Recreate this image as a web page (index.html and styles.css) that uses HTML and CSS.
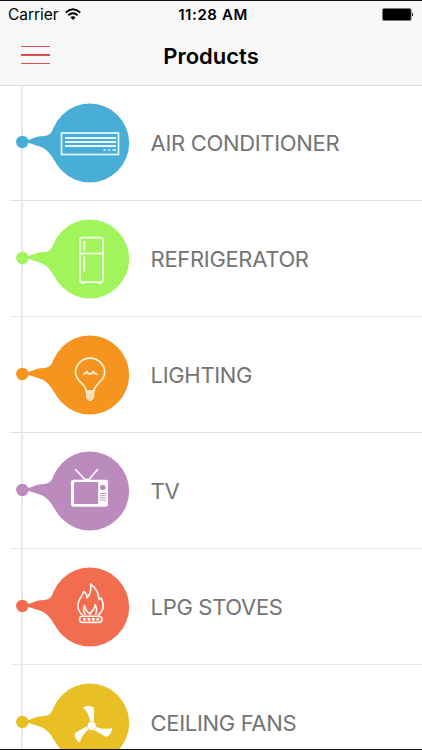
FILE: index.html
```html
<!DOCTYPE html>
<html lang="en">
<head>
<meta charset="utf-8">
<title>Products</title>
<link rel="stylesheet" href="styles.css">
</head>
<body>
<div class="screen">
<header class="header">
  <div class="status">
    <div class="carrier"><span>Carrier</span>
      <svg width="16" height="13" viewBox="0 0 16 13"><g fill="none" stroke="#000" stroke-width="2"><path d="M.8 4.6Q8-2 15.2 4.6"/><path d="M3.3 7.3Q8 3.1 12.7 7.3"/></g><path d="M5.4 9.3Q8 7.2 10.6 9.3L8 12Z"/></svg>
    </div>
    <div class="time">11:28 AM</div>
    <svg class="battery" width="32" height="13" viewBox="0 0 32 13"><rect x=".5" y=".5" width="28.6" height="12" rx="1.5" fill="#000" stroke="#777" stroke-width=".8"/><path d="M30 4.5Q32 6.5 30 8.5Z"/></svg>
  </div>
  <div class="nav">
    <div class="menu"><i></i><i></i><i></i></div>
    <h1>Products</h1>
  </div>
</header>
<svg class="defs" width="0" height="0"><defs>
  <g id="drop"><circle cx="22.3" cy="57" r="6.2"/><circle cx="89.8" cy="58" r="39.4"/><path d="M27 55.400C32 54 36 51.500 41 51.200C49 51 51.500 49 54 42L66 58L54.500 76C50 68 46 63.500 39 61.300C34 60 31 58.200 27 57.700Z"/></g>
</defs></svg>
<main class="list">
  <div class="row strong blue">
    <svg class="icon" viewBox="0 0 150 116"><use href="#drop"/><g fill="none" stroke="#eaf7fc"><rect x="61.500" y="48" width="57" height="21.500" stroke-width="1.700"/><path d="M65 53H116M65 57H116M65 61H116" stroke-width="1.800"/><path d="M103.500 65H105.500M108 65H110M112.500 65H116" stroke-width="1.700"/></g></svg>
    <span class="label">AIR CONDITIONER</span>
  </div>
  <div class="row green">
    <svg class="icon" viewBox="0 0 150 116"><use href="#drop"/><g fill="none" stroke="#f3ffe9" stroke-width="1.700"><rect x="79.900" y="36.700" width="23" height="44.400" rx="1.500"/><path d="M80 52.500H103"/><path d="M84.200 40V50M84.200 55.500V70.500" stroke-width="2"/><path d="M81.500 82.300H85M98 82.300H101.500" stroke-width="1.500"/></g></svg>
    <span class="label">REFRIGERATOR</span>
  </div>
  <div class="row strong orange">
    <svg class="icon" viewBox="0 0 150 116"><use href="#drop"/><g fill="none" stroke="#fff3df" stroke-width="1.600"><path d="M86.200 74C85.800 66.500 75.500 64.500 75.500 55.500A14.600 14.400 0 0 1 104.700 55.500C104.700 64.500 94.500 66.500 94 74Z"/><path d="M83 57.500Q86 57 86.800 54Q87.500 57 90 57Q92.500 57 93.300 54Q94 57 97.500 57.500"/><path d="M86.500 75H93.800V80L91.500 83.500H88.800L86.500 80Z" fill="#fbd29b" stroke-width="1"/><path d="M86 77H94M86.500 80H93.800" stroke-width=".8"/></g></svg>
    <span class="label">LIGHTING</span>
  </div>
  <div class="row purple">
    <svg class="icon" viewBox="0 0 150 116"><use href="#drop"/><path fill="#fff" fill-rule="evenodd" d="M73.500 46.800H105.500Q108 46.800 108 49V71Q108 73.800 105.500 73.800H73.500Q71 73.800 71 71V49Q71 46.800 73.500 46.800ZM75.500 49Q74 49 74 50.500V69.500Q74 71 75.500 71H98.200V49Z"/><circle cx="102.800" cy="54.500" r="2.800" fill="#bc8bbd"/><path d="M99.800 60.500H106M99.800 62.700H106M99.800 64.900H106M99.800 67.100H106" stroke="#bc8bbd" stroke-width=".9"/><path d="M75.500 36.500L85.500 47M97.500 36.500L88.500 47" stroke="#fff" stroke-width="1.600" stroke-linecap="round"/><path d="M83 47.500Q87 43.500 91 47.500Z" fill="#fff"/></svg>
    <span class="label">TV</span>
  </div>
  <div class="row red">
    <svg class="icon" viewBox="0 0 150 116"><use href="#drop"/><g fill="none" stroke="#fff4f0" stroke-width="1.600" stroke-linejoin="round"><path d="M83 66.500C77 62 77 55 79.500 50.500C81.500 47 83.500 45 83.500 42.500C86 43.500 87 46 86.700 49C90 46 91.500 41.500 90.500 35C97 40 99 44.500 98.800 50.500L101 49C104.800 56 103.500 62 98 66.500"/><path d="M85.500 66C82.500 62 83.500 59 84.500 56.500Q85.500 62 89.500 64.500C93 62.500 95 60 95 55.500Q98 61 95.500 66M90 66Q91 62 93.500 60"/><rect x="79.500" y="67.200" width="22.500" height="6.200" rx="3.100"/></g><path d="M83 70.200H100" stroke="#fff" stroke-width="2.600" stroke-dasharray="2.800 1.700"/></svg>
    <span class="label">LPG STOVES</span>
  </div>
  <div class="row yellow">
    <svg class="icon" viewBox="0 0 150 116"><use href="#drop"/><g fill="#fff"><path id="blade" d="M90.200 56.500C89.500 51 87 46 83.300 42.500Q84.500 40.800 88.500 40.900Q94 40.900 94 44.500V56.500Z"/><use href="#blade" transform="rotate(120 91.700 61)"/><use href="#blade" transform="rotate(240 91.700 61)"/><circle cx="91.700" cy="61" r="4.300"/></g><circle cx="91.700" cy="61" r="4.600" fill="none" stroke="#efd477" stroke-width=".6"/></svg>
    <span class="label">CEILING FANS</span>
  </div>
</main>
</div>
</body>
</html>
```
FILE: styles.css
```css
* { box-sizing: border-box; }
body { margin: 0; background: #fff; font-family: Inter, "Liberation Sans", sans-serif; }
.screen { height: 750px; overflow: hidden; border-top: 1px solid #111; border-bottom: 1px solid #111; }
.header { height: 85px; background: #f8f8f8; border-bottom: 1px solid #dcdcdc; }
.status { height: 27px; padding: 0 8px 0 8px; display: grid; grid-template-columns: 1fr auto 1fr; align-items: center; color: #000; }
.carrier { display: flex; align-items: center; gap: 7px; font-size: 15.5px; letter-spacing: -.05px; }
.time { font-size: 15px; font-weight: 600; letter-spacing: .6px; padding-left: 4px; }
.battery { justify-self: end; }
.nav { height: 55px; padding: 0 21px; display: grid; grid-template-columns: 29px 1fr 29px; align-items: center; }
.menu { display: flex; flex-direction: column; gap: 7.5px; margin-top: -1px; }
.menu i { height: 1.3px; background: #dc4c4c; }
h1 { margin: 0; text-align: center; font-size: 22px; line-height: 30px; font-weight: 600; }
.defs { display: block; }
.list { margin-top: -1px; }
.row { height: 116px; display: flex; align-items: center; background: linear-gradient(#e9e9e9, #e9e9e9) 21px 0 / 2px 100% no-repeat, linear-gradient(#e8e8e8, #e8e8e8) 11px 100% / 411px 1px no-repeat; }
.strong { background: linear-gradient(#e9e9e9, #e9e9e9) 21px 0 / 2px 100% no-repeat, linear-gradient(#dedede, #dedede) 11px 100% / 411px 1px no-repeat; }
.icon { width: 150px; height: 116px; flex: none; fill: currentColor; }
.label { color: #747474; font-size: 22px; line-height: 28px; letter-spacing: -.33px; padding-left: .6px; white-space: nowrap; }
.blue { color: #48add7; }
.green { color: #a2f45d; }
.orange { color: #f69420; }
.purple { color: #bc8bbd; }
.red { color: #f26c4f; }
.yellow { color: #e8c026; }
```
